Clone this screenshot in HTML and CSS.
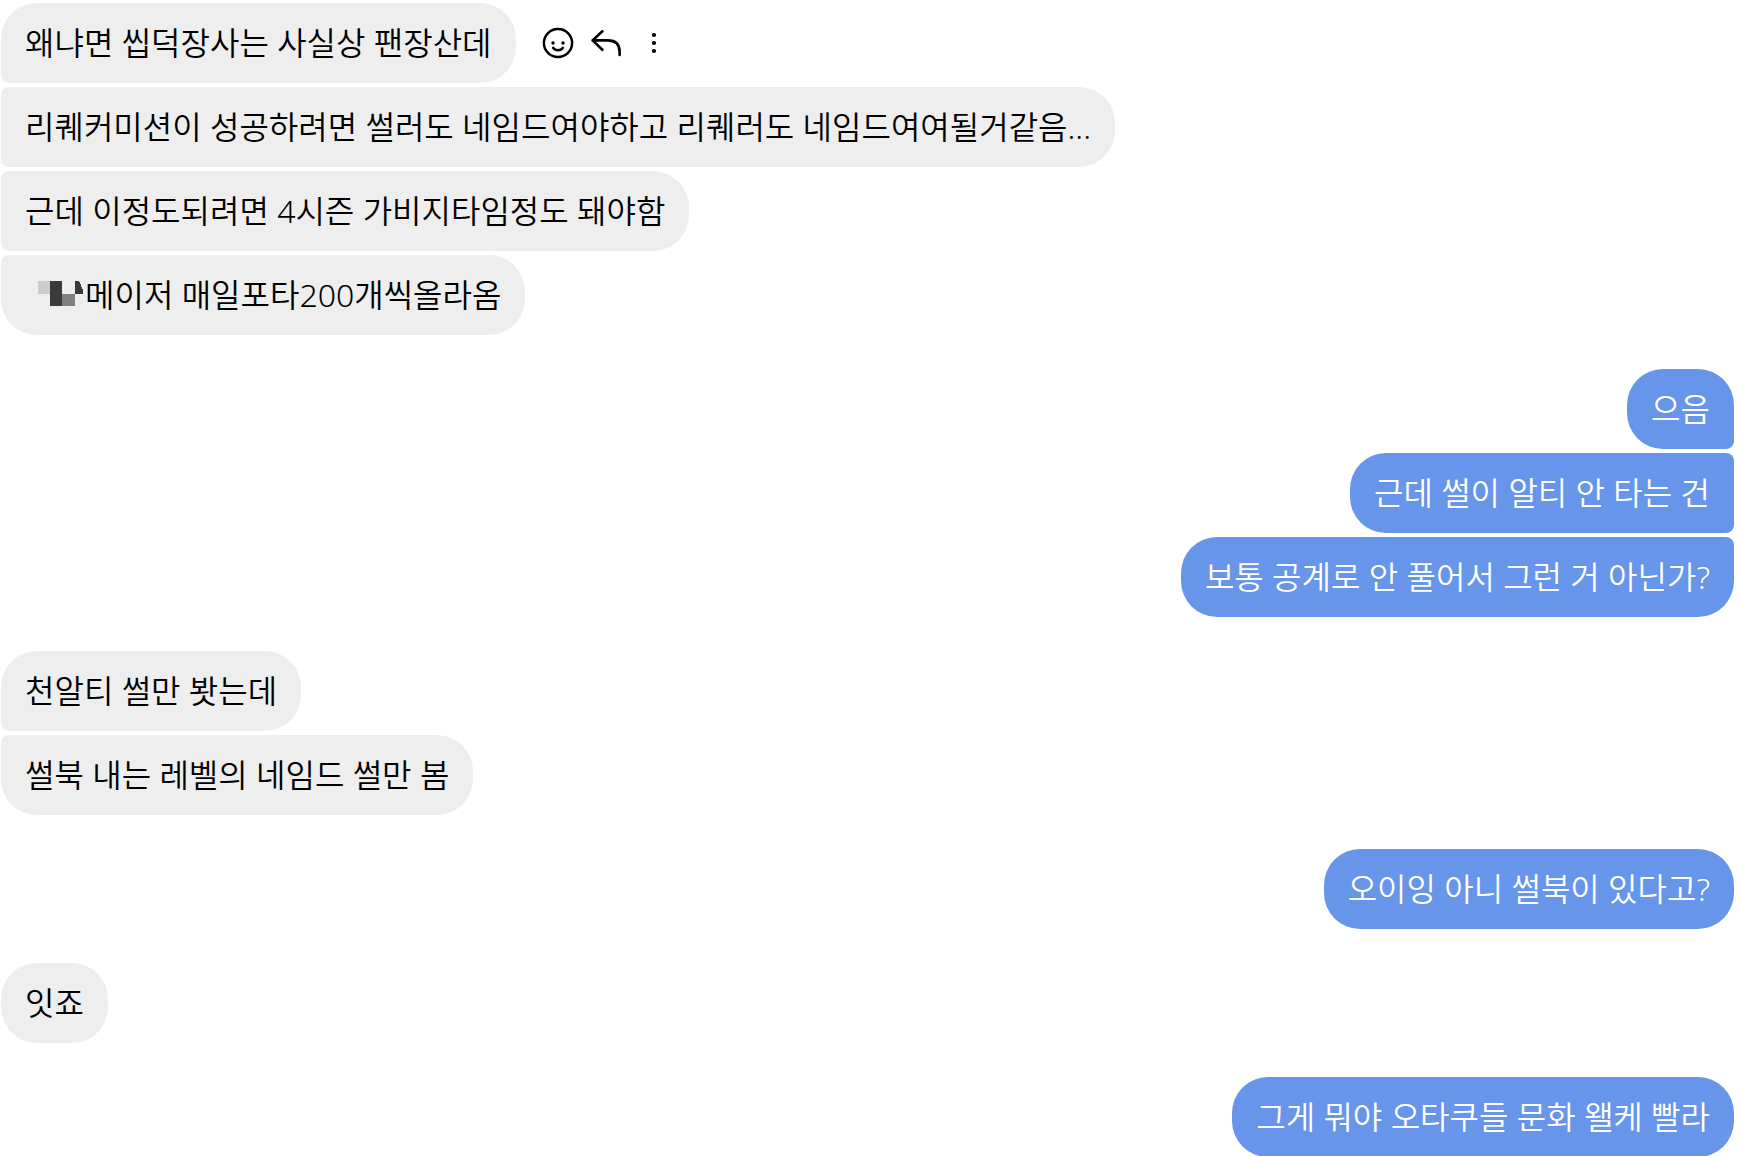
FILE: index.html
```html
<!DOCTYPE html>
<html lang="ko">
<head>
    <meta charset="UTF-8">
    <meta name="viewport" content="width=device-width, initial-scale=1.0">
    <title>쪽지</title>
    <link rel="stylesheet" href="styles.css">
</head>
<body>
    <main class="chat">
        <div class="group received">
            <div class="row">
                <p class="bubble">왜냐면 씹덕장사는 사실상 팬장산데</p>
                <div class="actions">
                    <button type="button" aria-label="반응 추가">
                        <svg viewBox="0 0 48 48" fill="none" stroke="currentColor" stroke-width="2.5" stroke-linecap="round">
                            <circle cx="24" cy="24" r="14.1"/>
                            <path d="M19.2 28.8c1 1.6 2.8 2.4 4.8 2.4s3.8-.8 4.8-2.4"/>
                            <g fill="currentColor" stroke="none">
                                <circle cx="19" cy="24" r="1.7"/>
                                <circle cx="29" cy="24" r="1.7"/>
                            </g>
                        </svg>
                    </button>
                    <button type="button" aria-label="답장">
                        <svg viewBox="0 0 48 48" fill="none" stroke="currentColor" stroke-width="2.6" stroke-linecap="round" stroke-linejoin="round">
                            <path d="M20.4 12.3 10.6 21.4l9.8 9.4M10.6 21.4h15.2c7.6 0 11.8 3.8 11.8 11.4V36"/>
                        </svg>
                    </button>
                    <button type="button" aria-label="더 보기">
                        <svg viewBox="0 0 48 48" fill="currentColor">
                            <circle cx="24" cy="16" r="2.1"/>
                            <circle cx="24" cy="24" r="2.1"/>
                            <circle cx="24" cy="32" r="2.1"/>
                        </svg>
                    </button>
                </div>
            </div>
            <p class="bubble">리퀘커미션이 성공하려면 썰러도 네임드여야하고 리퀘러도 네임드여여될거같음...</p>
            <p class="bubble">근데 이정도되려면 4시즌 가비지타임정도 돼야함</p>
            <p class="bubble">
                <svg class="mosaic" viewBox="0 0 60 26" aria-hidden="true" shape-rendering="crispEdges">
                    <path fill="#ccc" d="M13 0h12v13H13z"/>
                    <path fill="#3a3a3a" d="M25 0h12v25H25zM50 0h4l4 9v4h-8z"/>
                    <path fill="#808080" d="M37 13h13v12H37z"/>
                </svg>메이저 매일포타200개씩올라옴
            </p>
        </div>

        <div class="group sent">
            <p class="bubble">으음</p>
            <p class="bubble">근데 썰이 알티 안 타는 건</p>
            <p class="bubble">보통 공계로 안 풀어서 그런 거 아닌가?</p>
        </div>

        <div class="group received">
            <p class="bubble">천알티 썰만 봣는데</p>
            <p class="bubble">썰북 내는 레벨의 네임드 썰만 봄</p>
        </div>

        <div class="group sent">
            <p class="bubble">오이잉 아니 썰북이 있다고?</p>
        </div>

        <div class="group received">
            <p class="bubble">잇죠</p>
        </div>

        <div class="group sent">
            <p class="bubble">그게 뭐야 오타쿠들 문화 왤케 빨라</p>
        </div>
    </main>
</body>
</html>
```
FILE: styles.css
```css
body {
    margin: 0;
    background: #fff;
    color: #000;
    font-family: "Noto Sans", "Noto Sans CJK KR", sans-serif;
    font-size: 32px;
    font-weight: 350;
    line-height: 48px;
}

.chat {
    box-sizing: border-box;
    height: 100vh;
    padding: 3px 8px 0 1px;
    overflow-y: auto;
    scrollbar-width: none;
}

.group {
    display: flex;
    flex-direction: column;
    gap: 4px;
    margin-bottom: 34px;
}

.group:last-child {
    margin-bottom: 0;
}

.received {
    align-items: flex-start;
}

.sent {
    align-items: flex-end;
}

.row {
    display: flex;
    align-items: center;
    gap: 18px;
}

.bubble {
    margin: 0;
    padding: 16px 24px;
    border-radius: 36px;
}

.received .bubble {
    background: #eee;
}

.sent .bubble {
    background: #6795ea;
    color: #fff;
}

/* square off the corners where bubbles of one group meet */
.received > :not(:first-child) {
    border-top-left-radius: 8px;
}

.received > .bubble:not(:last-child),
.received > .row .bubble {
    border-bottom-left-radius: 8px;
}

.sent > :not(:first-child) {
    border-top-right-radius: 8px;
}

.sent > :not(:last-child) {
    border-bottom-right-radius: 8px;
}

.actions {
    display: flex;
}

.actions button {
    width: 48px;
    height: 48px;
    padding: 0;
    border: none;
    background: none;
    color: #000;
    cursor: pointer;
}

.actions svg {
    display: block;
}

.mosaic {
    width: 60px;
    height: 26px;
}
```
